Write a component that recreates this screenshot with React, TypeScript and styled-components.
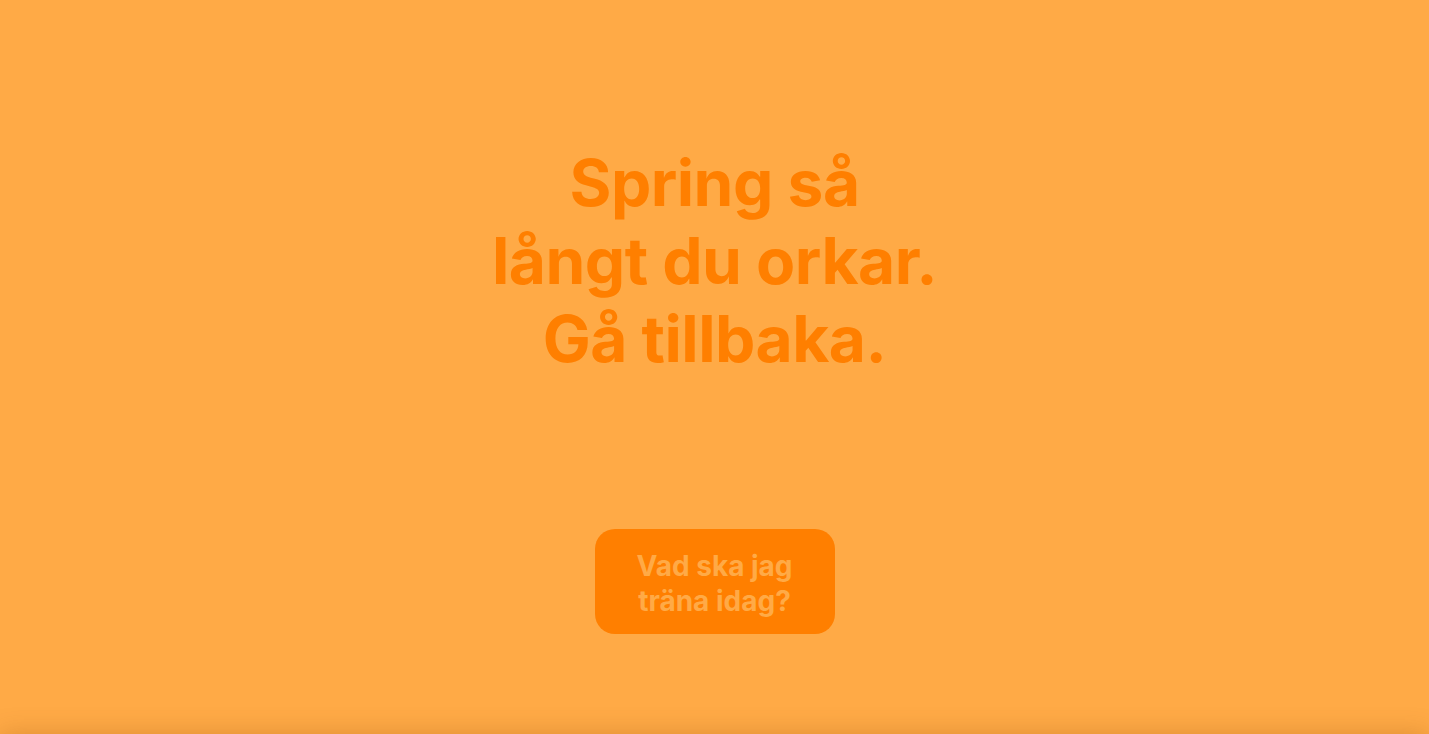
import React from 'react'
import styled, { createGlobalStyle } from 'styled-components'

const GlobalStyle = createGlobalStyle`
  html, body {
    margin: 0;
    padding: 0;
    background: #ffaa46;
    font-family: Inter, "Noto Sans", sans-serif;
  }
`

const Page = styled.main`
  height: 100vh;
  box-sizing: border-box;
  display: flex;
  flex-direction: column;
  align-items: center;
  padding-top: 144px;
`

const Headline = styled.h1`
  margin: 0;
  max-width: 460px;
  font-size: 64px;
  line-height: 78px;
  font-weight: 700;
  letter-spacing: -0.5px;
  color: #ff7f00;
  text-align: center;
`

const ActionButton = styled.button`
  margin-top: 151px;
  width: 240px;
  padding: 20px 30px 15px;
  border: none;
  border-radius: 20px;
  background: #ff7f00;
  color: #ffaa46;
  font-family: inherit;
  font-size: 28px;
  line-height: 35px;
  font-weight: 700;
  cursor: pointer;
`

const Footer = styled.footer`
  height: 120px;
  background: #ffaa46;
  box-shadow: 0 0 24px rgba(120, 60, 0, 0.25);
`

export default function App() {
  return (
    <>
      <GlobalStyle />
      <Page>
        <Headline>Spring så långt du orkar. Gå tillbaka.</Headline>
        <ActionButton>Vad ska jag träna idag?</ActionButton>
      </Page>
      <Footer />
    </>
  )
}
